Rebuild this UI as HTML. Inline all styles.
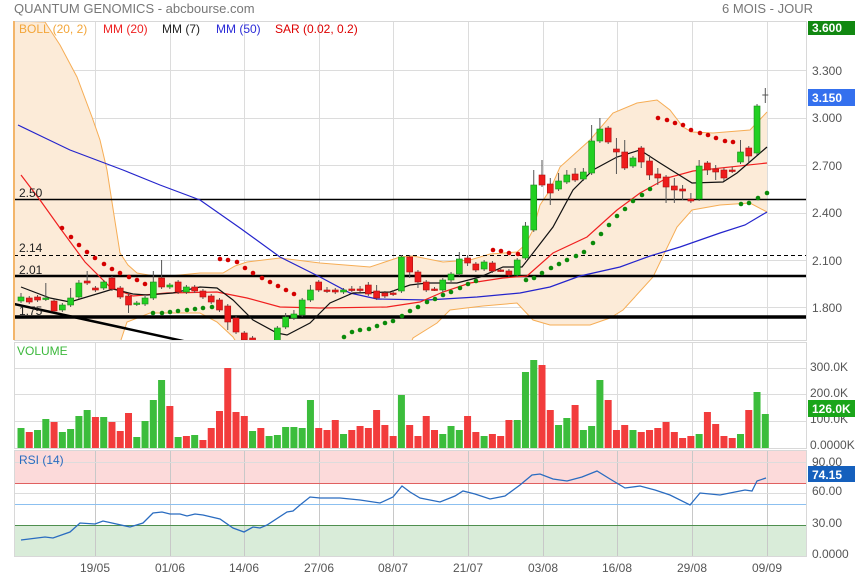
<!DOCTYPE html>
<html><head><meta charset="utf-8"><style>
body{margin:0;background:#fff;width:855px;height:579px;overflow:hidden;font-family:"Liberation Sans",sans-serif;}
svg{position:absolute;left:0;top:0;}
text{font-family:"Liberation Sans",sans-serif;}
</style></head><body>
<svg id="s" width="855" height="579" xmlns="http://www.w3.org/2000/svg">
<defs>
<clipPath id="cm"><rect x="14" y="21" width="792" height="319"/></clipPath>
</defs>
<rect x="0" y="0" width="855" height="579" fill="#fff"/>
<!-- RSI zones -->
<rect x="14" y="451" width="792" height="32" fill="#fcdada"/>
<rect x="14" y="525" width="792" height="31" fill="#d9ecd9"/>
<g id="grid" stroke="#dcdcdc" stroke-width="1"></g>
<g clip-path="url(#cm)" id="main"></g>
<g id="vol"></g>
<g id="rsi"></g>
<!-- frames -->
<g fill="none" stroke="#d8d8d8" stroke-width="1">
<rect x="14.5" y="21.5" width="792" height="319"/>
<rect x="14.5" y="342.5" width="792" height="106"/>
<rect x="14.5" y="450.5" width="792" height="106"/>
</g>
<line x1="14" y1="21" x2="14" y2="340" stroke="#f3b56a" stroke-width="2"/>
<text x="14" y="13" font-size="13" fill="#777">QUANTUM GENOMICS - abcbourse.com</text>
<text x="722" y="13" font-size="13" fill="#777">6 MOIS - JOUR</text>
<text x="19" y="33" font-size="12" fill="#f3a63a">BOLL (20, 2)</text>
<text x="103" y="33" font-size="12" fill="#ee2222">MM (20)</text>
<text x="162" y="33" font-size="12" fill="#222">MM (7)</text>
<text x="216" y="33" font-size="12" fill="#2b2bd8">MM (50)</text>
<text x="275" y="33" font-size="12" fill="#d00">SAR (0.02, 0.2)</text>
<text x="17" y="355" font-size="12" fill="#3cb83c">VOLUME</text>
<text x="19" y="464" font-size="12" fill="#2a6cc0">RSI (14)</text>
<g font-size="12" fill="#555">
<text x="812" y="75">3.300</text>
<text x="812" y="122">3.000</text>
<text x="812" y="170">2.700</text>
<text x="812" y="217">2.400</text>
<text x="812" y="265">2.100</text>
<text x="812" y="312">1.800</text>
<text x="810" y="371">300.0K</text>
<text x="810" y="397">200.0K</text>
<text x="810" y="423">100.0K</text>
<text x="810" y="449">0.0000K</text>
<text x="812" y="466">90.00</text>
<text x="812" y="495">60.00</text>
<text x="812" y="527">30.00</text>
<text x="812" y="558">0.0000</text>
</g>
<rect x="808" y="21" width="47" height="14" fill="#118811"/>
<text x="812" y="32" font-size="12" fill="#fff" font-weight="bold">3.600</text>
<rect x="808" y="89" width="47" height="17" fill="#3470ee"/>
<text x="812" y="102" font-size="12" fill="#fff" font-weight="bold">3.150</text>
<rect x="808" y="400" width="47" height="17" fill="#1aa51a"/>
<text x="812" y="413" font-size="12" fill="#fff" font-weight="bold">126.0K</text>
<rect x="808" y="466" width="47" height="16" fill="#1560bd"/>
<text x="812" y="479" font-size="12" fill="#fff" font-weight="bold">74.15</text>
<g font-size="12" fill="#555" text-anchor="middle">
<text x="95" y="572">19/05</text><text x="170" y="572">01/06</text><text x="244" y="572">14/06</text>
<text x="319" y="572">27/06</text><text x="393" y="572">08/07</text><text x="468" y="572">21/07</text>
<text x="543" y="572">03/08</text><text x="617" y="572">16/08</text><text x="692" y="572">29/08</text><text x="767" y="572">09/09</text>
</g>
<g font-size="12" fill="#222">
<text x="19" y="197">2.50</text><text x="19" y="252">2.14</text><text x="19" y="274">2.01</text><text x="19" y="315">1.75</text>
</g>
</svg>
<script>
var NS="http://www.w3.org/2000/svg";
function el(p,t,a){var e=document.createElementNS(NS,t);for(var k in a)e.setAttribute(k,a[k]);p.appendChild(e);return e;}
var G=document.getElementById('grid'),M=document.getElementById('main'),V=document.getElementById('vol'),R=document.getElementById('rsi');
var vx=[95,170,244,319,393,468,543,617,692,767];
vx.forEach(function(x){el(G,'line',{x1:x+.5,y1:21,x2:x+.5,y2:340});el(G,'line',{x1:x+.5,y1:342,x2:x+.5,y2:448});el(G,'line',{x1:x+.5,y1:450,x2:x+.5,y2:556,stroke:'#c8c8c8'});});
[70,118,165,213,260,307].forEach(function(y){el(G,'line',{x1:14,y1:y+.5,x2:806,y2:y+.5});});
[368,394,421].forEach(function(y){el(G,'line',{x1:14,y1:y+.5,x2:806,y2:y+.5});});
[462,493].forEach(function(y){el(G,'line',{x1:14,y1:y+.5,x2:806,y2:y+.5});});
function pts(a){return a.map(function(p){return p[0]+','+p[1]}).join(' ');}
var up=[[14,21],[45,22],[60,45],[77,77],[92,117],[100,140],[107,170],[114,215],[120,253],[128,265],[137,273],[160,277],[200,273],[223,273],[235,266],[247,262],[280,258],[320,263],[370,267],[400,257],[413,256],[443,262],[470,260],[490,254],[517,252],[525,245],[533,230],[540,205],[550,190],[560,167],[590,140],[613,113],[637,103],[657,100],[670,110],[683,127],[692,132],[713,133],[750,130],[767,112]];
var lo=[[14,345],[115,345],[120,343],[127,322],[150,313],[200,313],[217,322],[233,337],[238,345],[410,345],[413,338],[437,323],[450,310],[483,306],[517,303],[533,320],[550,325],[590,325],[610,318],[623,310],[653,277],[677,227],[692,210],[720,205],[750,203],[767,212]];
el(M,'polygon',{points:pts(up.concat(lo.slice().reverse())),fill:'#fcebd8'});
el(M,'polyline',{points:pts(up),fill:'none',stroke:'#f6ad55','stroke-width':1});
el(M,'polyline',{points:pts(lo),fill:'none',stroke:'#f6ad55','stroke-width':1});
el(M,'line',{x1:14,y1:199.5,x2:806,y2:199.5,stroke:'#000','stroke-width':1.5});
el(M,'line',{x1:14,y1:255.5,x2:806,y2:255.5,stroke:'#000','stroke-width':1,'stroke-dasharray':'4,3'});
el(M,'line',{x1:14,y1:276,x2:806,y2:276,stroke:'#000','stroke-width':2.5});
el(M,'line',{x1:14,y1:317,x2:806,y2:317,stroke:'#000','stroke-width':3.5});
el(M,'line',{x1:14,y1:304,x2:215,y2:348,stroke:'#000','stroke-width':2.5});
var blue=[[18,125],[45,138],[70,150],[123,170],[160,185],[200,200],[240,228],[280,257],[320,277],[350,293],[377,299],[427,300],[477,297],[520,293],[550,287],[580,276],[620,267],[650,256],[680,247],[720,233],[745,225],[767,212]];
var red=[[21,175],[40,200],[60,228],[85,262],[110,287],[133,296],[167,293],[217,292],[247,298],[280,307],[320,308],[387,307],[420,302],[443,292],[470,283],[503,278],[527,276],[553,253],[587,237],[617,210],[640,193],[667,178],[693,171],[767,163]];
var blk=[[21,287],[50,298],[70,302],[100,293],[113,289],[133,294],[147,295],[173,293],[200,287],[217,288],[233,300],[253,320],[277,333],[287,335],[310,323],[330,303],[353,293],[390,292],[410,285],[427,283],[457,283],[480,277],[503,267],[522,267],[533,253],[553,227],[573,190],[593,170],[617,157],[640,150],[660,163],[692,183],[723,182],[737,173],[767,147]];
el(M,'polyline',{points:pts(blue),fill:'none',stroke:'#2424cc','stroke-width':1.2});
el(M,'polyline',{points:pts(red),fill:'none',stroke:'#f02020','stroke-width':1.2});
el(M,'polyline',{points:pts(blk),fill:'none',stroke:'#111','stroke-width':1.2});
var sr=[[62,228],[71,237],[79,245],[87,252],[95,258],[104,264],[112,269],[120,273],[129,277],[137,280],[145,284],[220,259],[228,260],[237,262],[245,268],[253,273],[262,278],[270,282],[278,286],[286,290],[294,294],[493,250],[501,251],[509,253],[518,254],[658,118],[667,120],[675,123],[683,125],[691,130],[700,133],[708,135],[716,138],[725,141],[733,142]];
var sg=[[153,313],[162,313],[170,312],[178,311],[187,310],[195,309],[203,308],[212,307],[344,337],[352,332],[360,330],[369,329],[377,326],[385,323],[393,321],[402,316],[410,311],[418,307],[427,302],[435,299],[443,295],[451,292],[460,288],[468,284],[476,281],[526,280],[534,278],[542,273],[551,268],[559,264],[567,260],[576,256],[584,252],[593,243],[601,234],[609,225],[617,216],[625,209],[633,201],[642,195],[650,189],[741,204],[749,203],[758,198],[767,193]];
sr.forEach(function(p){el(M,'circle',{cx:p[0],cy:p[1],r:2.3,fill:'#d40000'});});
sg.forEach(function(p){el(M,'circle',{cx:p[0],cy:p[1],r:2.3,fill:'#0a8a0a'});});
// candles [o,c,h,l]
var C=[[301,297,293,303],[298,302,296,304],[297,300,295,302],[299,298,283,301],[301,311,299,312],[310,305,303,312],[305,298,288,307],[297,283,280,299],[281,283,271,285],[288,290,286,292],[288,282,280,290],[278,289,276,291],[288,297,286,299],[296,305,294,313],[304,303,301,306],[304,298,296,306],[298,282,271,300],[278,287,260,289],[287,285,283,289],[282,292,280,294],[292,287,285,294],[287,291,285,293],[291,297,289,299],[296,302,294,304],[300,310,298,312],[306,322,304,330],[318,332,316,334],[333,340,331,342],[338,345,336,347],[345,350,343,352],[345,350,343,352],[345,328,326,347],[327,317,313,329],[318,314,310,320],[315,300,298,317],[300,290,285,302],[282,290,280,292],[290,291,287,293],[290,292,288,294],[292,290,288,294],[289,290,286,292],[289,290,286,292],[285,294,282,296],[291,298,285,300],[293,296,291,298],[293,293,290,296],[291,257,255,293],[257,272,255,278],[272,282,270,288],[282,290,280,292],[289,289,287,291],[290,280,278,292],[280,274,272,282],[274,259,252,276],[258,263,255,266],[264,270,262,272],[269,262,260,271],[263,271,261,273],[270,270,268,272],[271,275,269,277],[275,260,258,277],[258,226,222,260],[230,185,170,232],[175,185,160,187],[184,193,178,205],[189,181,173,191],[182,175,170,184],[174,180,168,182],[179,172,168,181],[173,141,125,175],[141,129,118,143],[128,142,126,144],[149,152,138,174],[152,168,140,170],[166,158,156,168],[148,162,146,168],[161,175,155,180],[174,178,168,185],[177,187,175,203],[186,190,178,203],[189,191,185,200],[199,201,193,203],[199,166,160,201],[163,170,161,175],[169,172,165,180],[170,178,168,181],[170,171,167,173],[162,152,140,164],[148,156,146,162],[153,106,104,155],[95,95,88,103]];
var vt=[428,432,430,419,422,432,429,416,410,417,417,422,431,413,437,421,400,380,406,437,436,435,440,428,411,368,412,416,431,428,436,435,427,427,428,400,428,430,420,434,430,426,428,410,425,436,395,425,436,416,430,434,426,430,416,432,436,434,436,420,420,372,360,365,410,425,418,405,430,426,380,400,430,425,430,432,430,428,422,432,438,436,434,412,424,436,438,434,410,392,414];
var vc="GRGGRGGGGRGRRRGGGGRGRGRRRRRRGRGGGG";
for(var i=0;i<C.length;i++){
 var x=21+i*8.27,c=C[i],g=c[1]<c[0]||(c[1]==c[0]&&i>80);
 el(M,'line',{x1:x,y1:c[2],x2:x,y2:c[3],stroke:'#555','stroke-width':1});
 var t=Math.min(c[0],c[1]),h=Math.max(1.5,Math.abs(c[1]-c[0]));
 if(i==90){el(M,'line',{x1:x-3,y1:95,x2:x+3,y2:95,stroke:'#555'});}
 else el(M,'rect',{x:x-3,y:t,width:6,height:h,fill:g?'#22d022':'#ee1c1c',stroke:g?'#1a8a1a':'#b01010','stroke-width':0.6});
 var vg=i<vc.length?vc[i]=='G':(i>=89?true:g);
 el(V,'rect',{x:x-3.5,y:vt[i],width:7,height:448-vt[i],fill:vg?'#3cbd3c':'#f23c3c'});
}
el(R,'line',{x1:14,y1:483.5,x2:806,y2:483.5,stroke:'#e06060'});
el(R,'line',{x1:14,y1:504.5,x2:806,y2:504.5,stroke:'#8cc0f0'});
el(R,'line',{x1:14,y1:525.5,x2:806,y2:525.5,stroke:'#4f8f4f'});
var rs=[[21,540],[45,537],[53,538],[70,532],[80,523],[95,524],[103,521],[112,523],[130,527],[143,523],[153,513],[162,512],[170,514],[180,514],[187,516],[195,514],[203,515],[220,519],[233,528],[244,532],[253,527],[260,528],[267,525],[287,512],[293,511],[300,505],[310,497],[320,498],[340,498],[360,500],[380,503],[393,497],[402,486],[410,492],[420,498],[440,502],[455,496],[463,491],[475,494],[490,499],[505,496],[520,485],[532,475],[540,474],[553,479],[567,481],[582,477],[597,471],[610,479],[625,488],[640,486],[655,490],[670,495],[690,505],[700,493],[720,495],[735,492],[745,490],[752,491],[757,481],[766,478]];
el(R,'polyline',{points:pts(rs),fill:'none',stroke:'#2a6cc0','stroke-width':1.3});
</script>
</body></html>
